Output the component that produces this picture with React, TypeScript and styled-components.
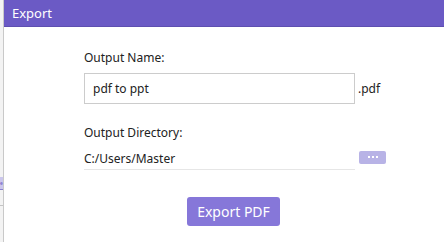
import * as React from "react"
import styled, { createGlobalStyle } from "styled-components"

const GlobalStyle = createGlobalStyle`
  html, body {
    margin: 0;
    padding: 0;
    background: #ffffff;
  }
  body {
    font-family: "Noto Sans", "Open Sans", sans-serif;
    color: #222;
  }
`

export default function App() {
  return (
    <>
      <GlobalStyle />
      <Screen>
        <BehindStrip>
          <BehindTab>e</BehindTab>
          <BehindLine />
        </BehindStrip>
        <Dialog>
          <Header>Export</Header>
          <Body>
            <Label>Output Name:</Label>
            <Row $top={7}>
              <NameInput value="pdf to ppt" onChange={function(){}} />
              <Suffix>.pdf</Suffix>
            </Row>
            <Label $top={20}>Output Directory:</Label>
            <Row $top={9}>
              <DirField>C:/Users/Master</DirField>
              <BrowseButton>
                <Dot /><Dot /><Dot />
              </BrowseButton>
            </Row>
            <Footer>
              <ExportButton>Export PDF</ExportButton>
            </Footer>
          </Body>
        </Dialog>
      </Screen>
    </>
  )
}

const Screen = styled.div`
  display: flex;
  width: 444px;
  height: 242px;
  overflow: hidden;
`

const BehindStrip = styled.div`
  position: relative;
  width: 3px;
  flex-shrink: 0;
  background: #f3f3f3;
  border-right: 1px solid #c9c9c9;
`

const BehindTab = styled.div`
  position: absolute;
  top: 177px;
  left: 0;
  width: 3px;
  height: 12px;
  background: #cbc6ec;
  border-bottom: 1px solid #8a80d0;
  color: #6a5ac4;
  font-size: 5px;
  line-height: 12px;
`

const BehindLine = styled.div`
  position: absolute;
  top: 205px;
  left: 0;
  width: 3px;
  height: 1px;
  background: #c4c4c4;
`

const Dialog = styled.div`
  flex: 1;
  display: flex;
  flex-direction: column;
  background: #ffffff;
`

const Header = styled.div`
  height: 26px;
  flex-shrink: 0;
  display: flex;
  align-items: center;
  padding-left: 8px;
  background: #6b5ac5;
  border-bottom: 1px solid #5e4fb0;
  color: #ffffff;
  font-size: 13px;
`

const Body = styled.div`
  display: flex;
  flex-direction: column;
  padding: 22px 0 0 80px;
`

const Label = styled.div<{ $top?: number }>`
  margin-top: ${props => props.$top || 0}px;
  font-size: 12px;
  line-height: 17px;
  color: #222;
`

const Row = styled.div<{ $top: number }>`
  display: flex;
  align-items: center;
  margin-top: ${props => props.$top}px;
`

const NameInput = styled.input`
  box-sizing: border-box;
  width: 271px;
  height: 31px;
  margin: 0;
  padding: 0 8px;
  border: 1px solid #cccccc;
  border-radius: 0;
  outline: none;
  font-family: "Noto Sans", "Open Sans", sans-serif;
  font-size: 12px;
  color: #222;
`

const Suffix = styled.span`
  margin-left: 3px;
  font-size: 12px;
  color: #222;
`

const DirField = styled.div`
  box-sizing: border-box;
  width: 271px;
  height: 20px;
  border-bottom: 1px solid #e6e6e6;
  font-size: 12px;
  line-height: 17px;
  color: #222;
`

const BrowseButton = styled.div`
  display: flex;
  align-items: center;
  justify-content: center;
  gap: 2px;
  width: 27px;
  height: 13px;
  margin: -6px 0 0 4px;
  background: #b8b3e6;
  border-radius: 2px;
`

const Dot = styled.span`
  width: 2px;
  height: 2px;
  background: #ffffff;
`

const Footer = styled.div`
  display: flex;
  padding-left: 103px;
  margin-top: 27px;
`

const ExportButton = styled.button`
  width: 93px;
  height: 29px;
  border: none;
  border-radius: 3px;
  background: #8677d9;
  color: #ffffff;
  font-family: "Noto Sans", "Open Sans", sans-serif;
  font-size: 14px;
  padding: 0;
`
